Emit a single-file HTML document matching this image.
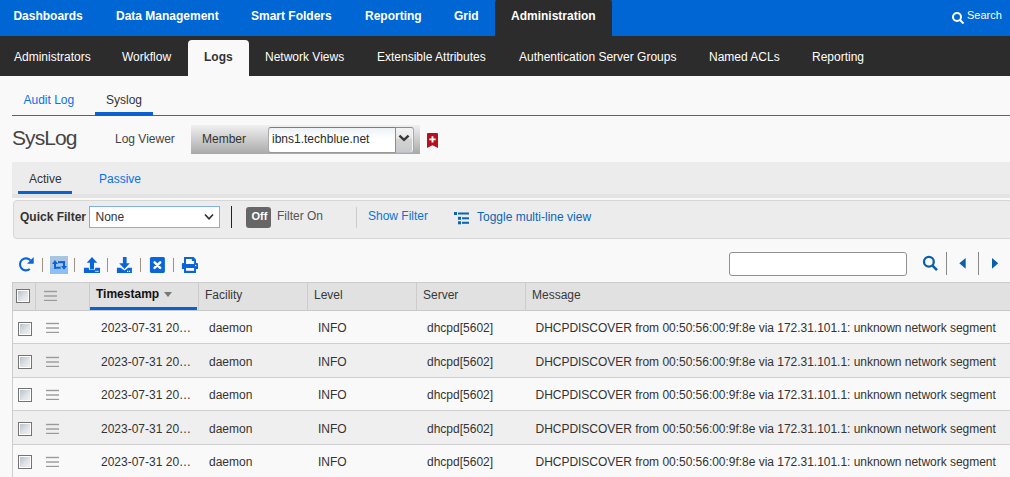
<!DOCTYPE html>
<html><head><meta charset="utf-8">
<style>
*{box-sizing:border-box;margin:0;padding:0}
html,body{width:1010px;height:477px;overflow:hidden;background:#f9f9f9;font-family:"Liberation Sans",sans-serif;font-size:12px;color:#333}
.a{position:absolute;white-space:nowrap;line-height:14px}
#top{position:absolute;left:0;top:0;width:1010px;height:36px;background:#0066d4}
#sub{position:absolute;left:0;top:36px;width:1010px;height:40px;background:#2c2c2c}
.tn{color:#fff;font-weight:bold;top:9px}
.sn{color:#fff;top:50px}
.lnk{color:#0472ec}
.hd{top:288px;color:#383838}
.cell{color:#333}
.row{position:absolute;left:13px;width:997px}
.cb{position:absolute;width:14px;height:14px;border:1px solid #737373;background:linear-gradient(135deg,#b4bcc8,#dfe2e6 55%,#f4f4f4);box-shadow:inset 0 0 0 1px #fff}
.mn{position:absolute;width:13px;height:11px}
.sep{position:absolute;width:1px;background:#9c9482}
</style></head><body>
<div id="top"></div>
<div class="a tn" style="left:13.4px">Dashboards</div>
<div class="a tn" style="left:116px">Data Management</div>
<div class="a tn" style="left:251px">Smart Folders</div>
<div class="a tn" style="left:365px">Reporting</div>
<div class="a tn" style="left:454px">Grid</div>
<div style="position:absolute;left:495px;top:0;width:117px;height:36px;background:#2c2c2c;border-radius:2px 2px 0 0"></div>
<div class="a tn" style="left:511px">Administration</div>
<svg style="position:absolute;left:951px;top:11px" width="14" height="14" viewBox="0 0 14 14"><circle cx="6" cy="6" r="4" fill="none" stroke="#fff" stroke-width="2"/><line x1="9" y1="9" x2="12.5" y2="12.5" stroke="#fff" stroke-width="2"/></svg>
<div class="a" style="left:967px;top:8px;color:#fff;font-size:11px">Search</div>

<div id="sub"></div>
<div class="a sn" style="left:14px">Administrators</div>
<div class="a sn" style="left:122px">Workflow</div>
<div style="position:absolute;left:188px;top:40px;width:61px;height:36px;background:#f9f9f9;border-radius:4px 4px 0 0"></div>
<div class="a sn" style="left:204px;color:#333;font-weight:bold">Logs</div>
<div class="a sn" style="left:265px">Network Views</div>
<div class="a sn" style="left:377px">Extensible Attributes</div>
<div class="a sn" style="left:519px">Authentication Server Groups</div>
<div class="a sn" style="left:709px">Named ACLs</div>
<div class="a sn" style="left:812px">Reporting</div>

<!-- sub tabs -->
<div class="a lnk" style="left:23.5px;top:93px">Audit Log</div>
<div class="a" style="left:106px;top:93px;color:#333">Syslog</div>
<div style="position:absolute;left:12px;top:115px;width:998px;height:1px;background:#1c6fd8"></div>
<div style="position:absolute;left:95px;top:112px;width:58px;height:4px;background:#0a62d0"></div>

<div class="a" style="left:12px;top:127px;font-size:21px;letter-spacing:-0.9px;line-height:22px;color:#444">SysLog</div>
<div class="a" style="left:115px;top:132px;color:#444">Log Viewer</div>
<div style="position:absolute;left:191px;top:125px;width:229px;height:29px;background:linear-gradient(#f0f0f0,#a9a9a9)"></div>
<div class="a" style="left:202px;top:132px;color:#333">Member</div>
<div style="position:absolute;left:268px;top:127px;width:128px;height:26px;background:linear-gradient(#edf2f5,#fff 45%);border:1px solid #999;border-top-color:#7e7e7e;border-left-color:#aaa;border-radius:3px 0 0 3px"></div>
<div class="a" style="left:272px;top:132px;color:#2b2b2b">ibns1.techblue.net</div>
<div style="position:absolute;left:395px;top:127px;width:19px;height:26px;background:linear-gradient(#f3f3f3 0%,#e8e8e8 42%,#d3d3d3 48%,#c9c9c9 100%);border:1px solid #8c8c8c;border-right-color:#aaa;border-bottom-color:#b8bccc;border-radius:0 3px 3px 0;box-shadow:inset -1px 0 0 #f4f4f4"></div>
<svg style="position:absolute;left:398px;top:134px" width="12" height="8" viewBox="0 0 12 8"><polyline points="1.4,1.6 6,5.8 10.6,1.6" fill="none" stroke="#3a3a3a" stroke-width="2.5"/></svg>
<svg style="position:absolute;left:427px;top:133px" width="11" height="15" viewBox="0 0 11 15"><path d="M1 0H10Q11 0 11 1V15L5.5 12.2L0 15V1Q0 0 1 0Z" fill="#b3121c"/><path d="M5.5 3.2V9.6M2.3 6.4H8.7" stroke="#fff" stroke-width="1.9"/></svg>

<!-- active/passive band -->
<div style="position:absolute;left:12px;top:162px;width:998px;height:36px;background:linear-gradient(#ececec 0,#ececec 32px,#e3e3e3 32px)"></div>
<div class="a" style="left:29px;top:172px;color:#333">Active</div>
<div class="a lnk" style="left:99px;top:172px">Passive</div>
<div style="position:absolute;left:18px;top:191px;width:54px;height:3px;background:#0a62d0"></div>

<!-- filter bar -->
<div style="position:absolute;left:13px;top:200px;width:1010px;height:39px;background:#ececec;border:1px solid #d6d6d6;border-radius:4px"></div>
<div class="a" style="left:20px;top:210px;font-weight:bold;color:#333">Quick Filter</div>
<div style="position:absolute;left:89px;top:206px;width:131px;height:22px;background:#fff;border:1px solid #7fb0e8"></div>
<div class="a" style="left:95.5px;top:210px;color:#333">None</div>
<svg style="position:absolute;left:204px;top:213px" width="11" height="8" viewBox="0 0 11 8"><polyline points="1,1.5 5,5.8 9,1.5" fill="none" stroke="#333" stroke-width="1.7"/></svg>
<div style="position:absolute;left:231px;top:206px;width:1px;height:22px;background:#222"></div>
<div style="position:absolute;left:246px;top:207px;width:25px;height:21px;background:#666;border-radius:3px"></div>
<div class="a" style="left:251.5px;top:209px;color:#fff;font-weight:bold;font-size:11px">Off</div>
<div class="a" style="left:277px;top:209px;color:#555">Filter On</div>
<div style="position:absolute;left:356px;top:207px;width:1px;height:21px;background:#ccc"></div>
<div class="a" style="left:368px;top:209px;color:#0a74dc">Show Filter</div>
<svg style="position:absolute;left:454px;top:212px" width="16" height="13" viewBox="0 0 16 13"><g fill="#0a64b4"><rect x="0" y="0" width="3" height="3"/><rect x="4" y="0.5" width="11" height="2"/><rect x="4" y="4.8" width="3" height="3"/><rect x="8" y="5.3" width="7" height="2"/><rect x="4" y="9.3" width="3" height="3"/><rect x="8" y="9.8" width="7" height="2"/></g></svg>
<div class="a" style="left:477px;top:210px;color:#0b66b5">Toggle multi-line view</div>

<!-- toolbar -->
<svg style="position:absolute;left:16px;top:254px" width="22" height="22" viewBox="0 0 22 22"><path d="M14.5 6.4A6 6 0 1 0 13.8 15" fill="none" stroke="#0a66d8" stroke-width="2.1"/><path d="M17.7 3V9.7H11Z" fill="#0a66d8"/></svg>
<div class="sep" style="left:42px;top:258px;height:14px"></div>
<div style="position:absolute;left:50px;top:256px;width:18px;height:18px;background:linear-gradient(#abc5de 0%,#a6c3e2 60%,#8ec0f2 62%,#8bbff5 100%)"></div>
<svg style="position:absolute;left:48px;top:254px" width="22" height="22" viewBox="0 0 22 22"><g fill="#0a66d8"><path d="M4 10H10L7 6Z"/><rect x="6" y="9.5" width="2" height="5.2"/><rect x="6" y="12.7" width="6.7" height="2"/><rect x="10" y="7.1" width="7" height="2.1"/><rect x="15" y="7.1" width="2" height="5.2"/><path d="M13 12H19L16 15.7Z"/></g></svg>
<div class="sep" style="left:74px;top:258px;height:14px"></div>
<svg style="position:absolute;left:80px;top:254px" width="22" height="22" viewBox="0 0 22 22"><g fill="#0a66d8"><path d="M12 3L17.3 8.75H14.05V15.4H9.9V8.75H6.7Z"/><path d="M3.9 13.8H8.6L9.4 15.9H14.6L15.4 13.8H20V18.9H3.9Z"/></g><rect x="15.4" y="16.8" width="1.2" height="1.2" fill="#fff"/><rect x="17.2" y="16.8" width="1.2" height="1.2" fill="#fff"/></svg>
<div class="sep" style="left:107px;top:258px;height:14px"></div>
<svg style="position:absolute;left:113px;top:254px" width="22" height="22" viewBox="0 0 22 22"><g fill="#0a66d8"><path d="M9.9 3H13.6V9.2H16.8L11.5 15L6.2 9.2H9.9Z"/><path d="M3.9 13.8H7.6L11.5 16.6L15.4 13.8H18.9V18.9H3.9Z"/></g><rect x="14" y="16.8" width="1.2" height="1.2" fill="#fff"/><rect x="15.9" y="16.8" width="1.2" height="1.2" fill="#fff"/></svg>
<div class="sep" style="left:140px;top:258px;height:14px"></div>
<svg style="position:absolute;left:146px;top:254px" width="22" height="22" viewBox="0 0 22 22"><rect x="3.9" y="3" width="15" height="15.9" rx="1.6" fill="#0a66d8"/><path d="M8.6 8.3L14.2 13.9M14.2 8.3L8.6 13.9" stroke="#fff" stroke-width="2.5" stroke-linecap="round"/></svg>
<div class="sep" style="left:173px;top:258px;height:14px"></div>
<svg style="position:absolute;left:178px;top:254px" width="22" height="22" viewBox="0 0 22 22"><g fill="#0a66d8"><path d="M6 3H15.6L18 5.4V10H6Z"/><path d="M5 9H19Q20 9 20 10V14.5Q20 15 19.5 15H18V18.9H6V15H4.4Q3.9 15 3.9 14.5V10Q3.9 9 5 9Z"/></g><path d="M8 5H13.8V7H16.1V9.9H8Z" fill="#fff"/><rect x="8" y="14" width="8.1" height="2.8" fill="#fff"/><rect x="17" y="10.9" width="1.2" height="1.2" fill="#fff"/></svg>

<div style="position:absolute;left:729px;top:252px;width:178px;height:24px;background:#fff;border:1px solid #929292;border-radius:3px"></div>
<svg style="position:absolute;left:922px;top:255px" width="17" height="17" viewBox="0 0 17 17"><circle cx="6.9" cy="6.8" r="4.9" fill="none" stroke="#0a5fa8" stroke-width="2.3"/><line x1="10.3" y1="10.3" x2="15" y2="15.2" stroke="#0a5fa8" stroke-width="2.6"/></svg>
<div style="position:absolute;left:946px;top:252px;width:1px;height:23px;background:#888"></div>
<svg style="position:absolute;left:959px;top:258px" width="7" height="11" viewBox="0 0 7 11"><path d="M6.7 0V10.7L0.3 5.35Z" fill="#0a5fa8"/></svg>
<div style="position:absolute;left:978px;top:252px;width:1px;height:23px;background:#888"></div>
<svg style="position:absolute;left:992px;top:258px" width="7" height="11" viewBox="0 0 7 11"><path d="M0 0V10.7L6.2 5.35Z" fill="#0a5fa8"/></svg>

<!-- table -->
<div style="position:absolute;left:12px;top:282px;width:998px;height:29px;background:#e1e1e1;border-top:1px solid #ccc;border-left:1px solid #ccc;border-bottom:1px solid #c8c8c8"></div>
<div style="position:absolute;left:12px;top:282px;width:1px;height:195px;background:#ccc"></div>
<div style="position:absolute;left:35px;top:283px;width:1px;height:27px;background:#ccc"></div>
<div style="position:absolute;left:89px;top:283px;width:1px;height:27px;background:#ccc"></div>
<div style="position:absolute;left:198px;top:283px;width:1px;height:27px;background:#ccc"></div>
<div style="position:absolute;left:307px;top:283px;width:1px;height:27px;background:#ccc"></div>
<div style="position:absolute;left:416px;top:283px;width:1px;height:27px;background:#ccc"></div>
<div style="position:absolute;left:525px;top:283px;width:1px;height:27px;background:#ccc"></div>
<div style="position:absolute;left:90px;top:307px;width:107px;height:3px;background:#0a62d0"></div>
<div class="cb" style="left:16px;top:289px"></div>
<svg class="mn" style="left:44px;top:290px" width="13" height="11" viewBox="0 0 13 11"><g fill="#9a9a9a"><rect x="0" y="0.8" width="13" height="1.4"/><rect x="0" y="5.3" width="13" height="1.4"/><rect x="0" y="9.8" width="13" height="1.4"/></g></svg>
<div class="a" style="left:96px;top:287px;font-weight:bold;color:#111">Timestamp</div>
<svg style="position:absolute;left:164px;top:292px" width="8" height="5" viewBox="0 0 8 5"><path d="M0 0H8L4 5Z" fill="#777"/></svg>
<div class="a hd" style="left:205px">Facility</div>
<div class="a hd" style="left:314px">Level</div>
<div class="a hd" style="left:423px">Server</div>
<div class="a hd" style="left:532px">Message</div>

<!--ROWS-->
<div style="position:absolute;left:13px;top:311px;width:997px;height:32px;background:#f9f9f9"></div>
<div style="position:absolute;left:13px;top:343px;width:997px;height:1px;background:#cfcfcf"></div>
<div class="cb" style="left:18px;top:322px"></div>
<svg class="mn" style="left:46px;top:322px" width="13" height="11" viewBox="0 0 13 11"><g fill="#9a9a9a"><rect x="0" y="0.8" width="13" height="1.4"/><rect x="0" y="5.3" width="13" height="1.4"/><rect x="0" y="9.8" width="13" height="1.4"/></g></svg>
<div class="a cell" style="left:101px;top:321px">2023-07-31 20…</div>
<div class="a cell" style="left:209px;top:321px">daemon</div>
<div class="a cell" style="left:318px;top:321px">INFO</div>
<div class="a cell" style="left:427px;top:321px">dhcpd[5602]</div>
<div class="a cell" style="left:535.5px;top:321px;letter-spacing:-0.025px">DHCPDISCOVER from 00:50:56:00:9f:8e via 172.31.101.1: unknown network segment</div>
<div style="position:absolute;left:13px;top:344px;width:997px;height:33px;background:#efefef"></div>
<div style="position:absolute;left:13px;top:377px;width:997px;height:1px;background:#cfcfcf"></div>
<div class="cb" style="left:18px;top:355px"></div>
<svg class="mn" style="left:46px;top:356px" width="13" height="11" viewBox="0 0 13 11"><g fill="#9a9a9a"><rect x="0" y="0.8" width="13" height="1.4"/><rect x="0" y="5.3" width="13" height="1.4"/><rect x="0" y="9.8" width="13" height="1.4"/></g></svg>
<div class="a cell" style="left:101px;top:355px">2023-07-31 20…</div>
<div class="a cell" style="left:209px;top:355px">daemon</div>
<div class="a cell" style="left:318px;top:355px">INFO</div>
<div class="a cell" style="left:427px;top:355px">dhcpd[5602]</div>
<div class="a cell" style="left:535.5px;top:355px;letter-spacing:-0.025px">DHCPDISCOVER from 00:50:56:00:9f:8e via 172.31.101.1: unknown network segment</div>
<div style="position:absolute;left:13px;top:378px;width:997px;height:32px;background:#f9f9f9"></div>
<div style="position:absolute;left:13px;top:410px;width:997px;height:1px;background:#cfcfcf"></div>
<div class="cb" style="left:18px;top:388px"></div>
<svg class="mn" style="left:46px;top:389px" width="13" height="11" viewBox="0 0 13 11"><g fill="#9a9a9a"><rect x="0" y="0.8" width="13" height="1.4"/><rect x="0" y="5.3" width="13" height="1.4"/><rect x="0" y="9.8" width="13" height="1.4"/></g></svg>
<div class="a cell" style="left:101px;top:388px">2023-07-31 20…</div>
<div class="a cell" style="left:209px;top:388px">daemon</div>
<div class="a cell" style="left:318px;top:388px">INFO</div>
<div class="a cell" style="left:427px;top:388px">dhcpd[5602]</div>
<div class="a cell" style="left:535.5px;top:388px;letter-spacing:-0.025px">DHCPDISCOVER from 00:50:56:00:9f:8e via 172.31.101.1: unknown network segment</div>
<div style="position:absolute;left:13px;top:411px;width:997px;height:33px;background:#efefef"></div>
<div style="position:absolute;left:13px;top:444px;width:997px;height:1px;background:#cfcfcf"></div>
<div class="cb" style="left:18px;top:422px"></div>
<svg class="mn" style="left:46px;top:423px" width="13" height="11" viewBox="0 0 13 11"><g fill="#9a9a9a"><rect x="0" y="0.8" width="13" height="1.4"/><rect x="0" y="5.3" width="13" height="1.4"/><rect x="0" y="9.8" width="13" height="1.4"/></g></svg>
<div class="a cell" style="left:101px;top:422px">2023-07-31 20…</div>
<div class="a cell" style="left:209px;top:422px">daemon</div>
<div class="a cell" style="left:318px;top:422px">INFO</div>
<div class="a cell" style="left:427px;top:422px">dhcpd[5602]</div>
<div class="a cell" style="left:535.5px;top:422px;letter-spacing:-0.025px">DHCPDISCOVER from 00:50:56:00:9f:8e via 172.31.101.1: unknown network segment</div>
<div style="position:absolute;left:13px;top:445px;width:997px;height:33px;background:#f9f9f9"></div>
<div style="position:absolute;left:13px;top:478px;width:997px;height:1px;background:#cfcfcf"></div>
<div class="cb" style="left:18px;top:455px"></div>
<svg class="mn" style="left:46px;top:456px" width="13" height="11" viewBox="0 0 13 11"><g fill="#9a9a9a"><rect x="0" y="0.8" width="13" height="1.4"/><rect x="0" y="5.3" width="13" height="1.4"/><rect x="0" y="9.8" width="13" height="1.4"/></g></svg>
<div class="a cell" style="left:101px;top:455px">2023-07-31 20…</div>
<div class="a cell" style="left:209px;top:455px">daemon</div>
<div class="a cell" style="left:318px;top:455px">INFO</div>
<div class="a cell" style="left:427px;top:455px">dhcpd[5602]</div>
<div class="a cell" style="left:535.5px;top:455px;letter-spacing:-0.025px">DHCPDISCOVER from 00:50:56:00:9f:8e via 172.31.101.1: unknown network segment</div>
<!--/ROWS-->
</body></html>
